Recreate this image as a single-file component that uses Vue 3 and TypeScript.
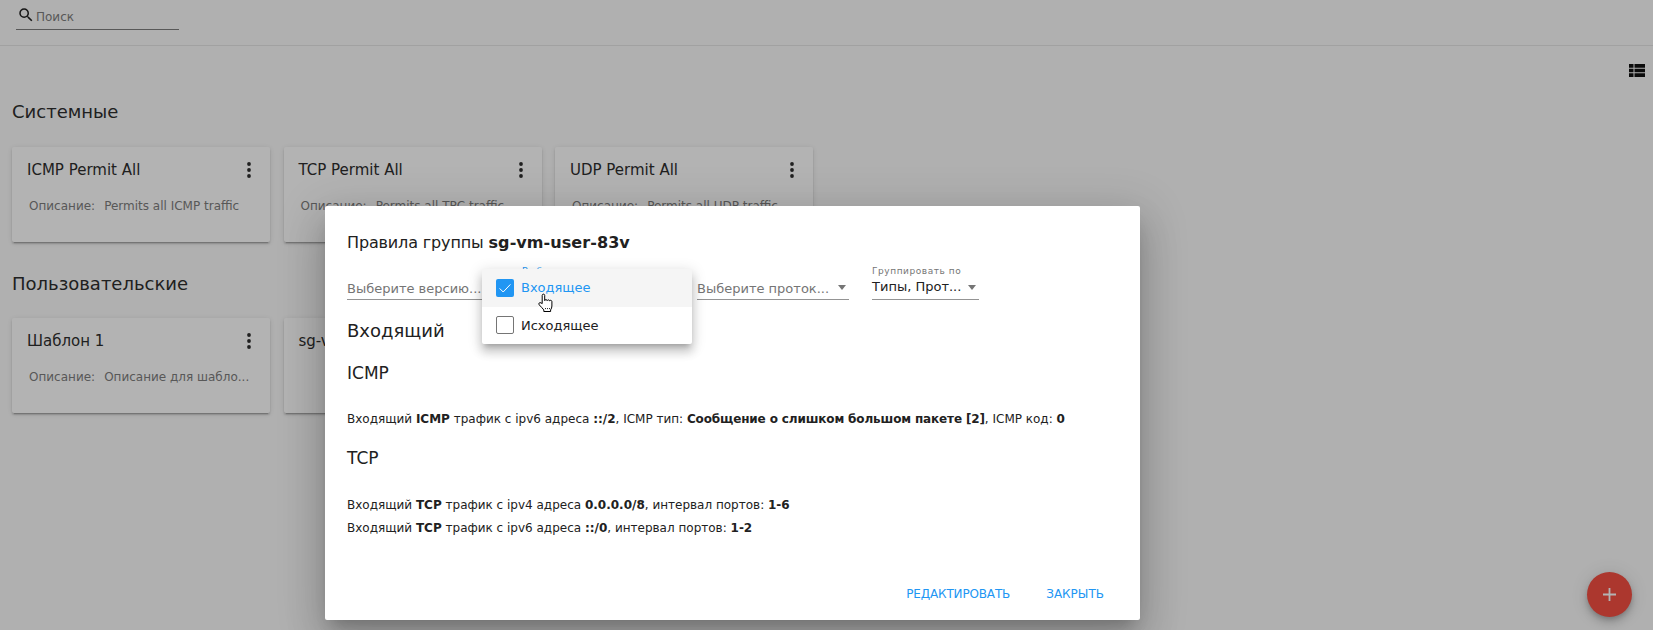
<template>
  <div class="page">
    <header class="topbar">
      <label class="search">
        <svg class="search-icon" viewBox="0 0 24 24"><path d="M15.5 14h-.79l-.28-.27A6.47 6.47 0 0 0 16 9.5 6.5 6.5 0 1 0 9.5 16c1.61 0 3.09-.59 4.23-1.57l.27.28v.79l5 4.99L20.49 19l-4.99-5zm-6 0C7.01 14 5 11.99 5 9.5S7.01 5 9.5 5 14 7.01 14 9.5 11.99 14 9.5 14z" /></svg>
        <span>Поиск</span>
      </label>
    </header>

    <main class="content">
      <div class="view-toggle">
        <svg viewBox="0 0 16 13"><path d="M0 0h4.5v3.7H0zM5.5 0H16v3.7H5.5zM0 4.65h4.5v3.7H0zM5.5 4.65H16v3.7H5.5zM0 9.3h4.5V13H0zM5.5 9.3H16V13H5.5z" /></svg>
      </div>
      <section v-for="group in groups" :key="group.title" class="group">
        <h2>{{ group.title }}</h2>
        <div class="cards">
          <article v-for="card in group.cards" :key="card.name" class="card">
            <div class="card-head">
              <span>{{ card.name }}</span>
              <svg class="dots" viewBox="0 0 4 16"><circle cx="2" cy="2" r="1.9" /><circle cx="2" cy="8" r="1.9" /><circle cx="2" cy="14" r="1.9" /></svg>
            </div>
            <p v-if="card.desc"><span>Описание:</span><span class="desc">{{ card.desc }}</span></p>
          </article>
        </div>
      </section>
    </main>

    <button class="fab" type="button" aria-label="Добавить">
      <svg viewBox="0 0 13 13"><path d="M5.6 0h1.8v5.6H13v1.8H7.4V13H5.6V7.4H0V5.6h5.6z" /></svg>
    </button>

    <div class="overlay"></div>

    <div class="dialog">
      <h3 class="dialog-title">Правила группы <b>sg-vm-user-83v</b></h3>
      <div class="filters">
        <div class="select select-version"><span class="placeholder">Выберите версию...</span></div>
        <div class="select select-direction"><small>Выберите направление</small></div>
        <div class="select select-proto">
          <span class="placeholder">Выберите проток...</span><i class="caret"></i>
        </div>
        <div class="select select-group">
          <small>Группировать по</small>
          <span class="value">Типы, Прот...</span><i class="caret"></i>
        </div>
      </div>
      <h4 class="direction">Входящий</h4>
      <template v-for="block in rules" :key="block.name">
        <h5 class="proto">{{ block.name }}</h5>
        <ul class="rules">
          <li v-for="(line, i) in block.lines" :key="i">
            <template v-for="(part, j) in line" :key="j">
              <b v-if="j % 2" :class="{ tight: part.length > 20 }">{{ part }}</b><span v-else>{{ part }}</span>
            </template>
          </li>
        </ul>
      </template>
      <div class="actions">
        <button type="button" class="edit">РЕДАКТИРОВАТЬ</button>
        <button type="button">ЗАКРЫТЬ</button>
      </div>

      <div class="menu">
        <div class="menu-item active">
          <span class="box checked">
            <svg viewBox="0 0 18 18"><path d="M3.6 9.4l3.6 3.6 7.2-7.6" /></svg>
          </span>
          Входящее
        </div>
        <div class="menu-item"><span class="box"></span>Исходящее</div>
        <svg class="hand" viewBox="0 0 18 20">
          <path d="M5.2 10.6V2.4c0-1.7 2.5-1.7 2.5 0v5.2c.2-1.3 2.3-1.3 2.5 0 .3-1.1 2.2-1 2.4.2.4-.8 2.2-.6 2.3.7v4.5c0 1.6-.5 2.7-1.3 3.9v1.6H6.8v-1.6C5.4 15 3.8 13.7 2.2 11.8c-1.1-1.4.6-2.9 1.8-1.9z" />
          <path class="hand-dots" d="M8 15.6h.9M10 15.6h.9M12 15.6h.9" />
        </svg>
      </div>
    </div>
  </div>
</template>

<script setup lang="ts">
interface Card {
  name: string;
  desc: string;
}

const groups: { title: string; cards: Card[] }[] = [
  {
    title: "Системные",
    cards: [
      { name: "ICMP Permit All", desc: "Permits all ICMP traffic" },
      { name: "TCP Permit All", desc: "Permits all TPC traffic" },
      { name: "UDP Permit All", desc: "Permits all UDP traffic" },
    ],
  },
  {
    title: "Пользовательские",
    cards: [
      { name: "Шаблон 1", desc: "Описание для шабло..." },
      { name: "sg-vm-user-83v", desc: "" },
    ],
  },
];

// odd items are bold
const rules: { name: string; lines: string[][] }[] = [
  {
    name: "ICMP",
    lines: [
      ["Входящий ", "ICMP", " трафик с ipv6 адреса ", "::/2", ", ICMP тип: ", "Сообщение о слишком большом пакете [2]", ", ICMP код: ", "0"],
    ],
  },
  {
    name: "TCP",
    lines: [
      ["Входящий ", "TCP", " трафик с ipv4 адреса ", "0.0.0.0/8", ", интервал портов: ", "1-6"],
      ["Входящий ", "TCP", " трафик с ipv6 адреса ", "::/0", ", интервал портов: ", "1-2"],
    ],
  },
];
</script>

<style>
html,
body {
  margin: 0;
  background: #fafafa;
}
</style>

<style scoped>
.page {
  position: relative;
  width: 1653px;
  height: 630px;
  overflow: hidden;
  background: #fafafa;
  color: #212121;
  font-family: "DejaVu Sans", sans-serif;
}

.topbar {
  height: 46px;
  box-sizing: border-box;
  border-bottom: 1px solid #e4e4e4;
  padding-left: 16px;
}

.search {
  display: flex;
  align-items: center;
  width: 163px;
  height: 30px;
  box-sizing: border-box;
  border-bottom: 1px solid #757575;
  color: #757575;
  font-size: 12px;
  padding-top: 5px;
}

.search-icon {
  width: 18px;
  height: 18px;
  margin: -4px 1px 0 1px;
  fill: #111;
}

.content {
  position: relative;
  padding: 53px 12px 0;
}

.view-toggle {
  position: absolute;
  top: 18px;
  right: 8px;
  width: 16px;
  height: 13px;
}

.view-toggle svg {
  display: block;
  width: 16px;
  height: 13px;
  fill: #000;
}

.group + .group {
  margin-top: 29px;
}

.group h2 {
  margin: 0 0 23px;
  font-size: 18px;
  font-weight: 400;
  line-height: 25px;
}

.group + .group h2 {
  margin-bottom: 22px;
}

.cards {
  display: flex;
  gap: 13.5px;
}

.card {
  width: 258px;
  height: 95px;
  box-sizing: border-box;
  padding: 13px 15px;
  border-radius: 2px;
  background: #fff;
  box-shadow: 0 3px 1px -2px rgba(0, 0, 0, 0.2), 0 2px 2px rgba(0, 0, 0, 0.14), 0 1px 5px rgba(0, 0, 0, 0.12);
}

.card-head {
  display: flex;
  align-items: center;
  justify-content: space-between;
  height: 20px;
  font-size: 15px;
}

.dots {
  width: 4px;
  height: 16px;
  margin-right: 4px;
  fill: #212121;
}

.card p {
  display: flex;
  margin: 18px 0 0 2px;
  color: #757575;
  font-size: 12px;
  line-height: 16px;
}

.desc {
  margin-left: 9px;
}

.fab {
  position: absolute;
  left: 1587px;
  top: 572px;
  display: flex;
  align-items: center;
  justify-content: center;
  width: 45px;
  height: 45px;
  border: 0;
  border-radius: 50%;
  background: #f44336;
  padding: 0;
  box-shadow: 0 3px 5px -1px rgba(0, 0, 0, 0.2), 0 6px 10px rgba(0, 0, 0, 0.14), 0 1px 18px rgba(0, 0, 0, 0.12);
}

.fab svg {
  width: 13px;
  height: 13px;
  fill: #fff;
}

.overlay {
  position: absolute;
  inset: 0;
  background: rgba(33, 33, 33, 0.34);
}

.dialog {
  position: absolute;
  left: 325px;
  top: 206px;
  width: 815px;
  height: 414px;
  box-sizing: border-box;
  padding: 28px 22px 0;
  background: #fff;
  border-radius: 2px;
  box-shadow: 0 11px 15px -7px rgba(0, 0, 0, 0.2), 0 24px 38px 3px rgba(0, 0, 0, 0.14), 0 9px 46px 8px rgba(0, 0, 0, 0.12);
}

.dialog-title {
  margin: 0;
  font-size: 16px;
  font-weight: 400;
  line-height: 18px;
  letter-spacing: -0.14px;
}

.dialog-title b {
  letter-spacing: 0.07px;
}

.filters {
  display: flex;
  align-items: flex-end;
  height: 36px;
  margin-top: 12px;
}

.select {
  position: relative;
  display: flex;
  align-items: center;
  height: 24px;
  box-sizing: border-box;
  border-bottom: 1px solid #949494;
  font-size: 13px;
}

.select small {
  position: absolute;
  left: 0;
  top: -11px;
  font-size: 9px;
  line-height: 12px;
  letter-spacing: 0.56px;
  color: #757575;
  white-space: nowrap;
}

.select-version {
  width: 135px;
}

.select-version .placeholder,
.select-proto .placeholder {
  padding-top: 2px;
}

.select-direction {
  width: 175px;
  border-color: transparent;
}

.select-direction small {
  left: 40px;
  color: #2196f3;
}

.select-proto {
  width: 152px;
  margin-left: 40px;
}

.select-group {
  width: 107px;
  margin-left: 23px;
}

.placeholder {
  color: #757575;
  white-space: nowrap;
}

.value {
  color: #212121;
  white-space: nowrap;
  padding-bottom: 2px;
}

.caret {
  width: 0;
  height: 0;
  margin-left: auto;
  margin-right: 3px;
  border-left: 4.5px solid transparent;
  border-right: 4.5px solid transparent;
  border-top: 5px solid #757575;
}

.direction {
  margin: 18px 0 0;
  font-size: 18px;
  font-weight: 400;
  line-height: 26px;
}

.proto {
  margin: 19px 0 0;
  font-size: 17px;
  font-weight: 400;
  line-height: 20px;
}

.rules {
  margin: 25px 0 0;
  padding: 0;
  list-style: none;
  font-size: 12px;
  line-height: 23px;
  color: #212121;
}

.rules + .proto {
  margin-top: 17px;
  padding-bottom: 1px;
}

.tight {
  letter-spacing: -0.14px;
}

.actions {
  position: absolute;
  right: 36px;
  bottom: 17px;
  display: flex;
  gap: 36px;
}

.actions button {
  border: 0;
  background: none;
  padding: 0;
  color: #2196f3;
  font: inherit;
  font-size: 12px;
  line-height: 18px;
}

.actions .edit {
  letter-spacing: -0.15px;
}

.menu {
  position: absolute;
  left: 157px;
  top: 63px;
  width: 210px;
  background: #fff;
  border-radius: 2px;
  box-shadow: 0 5px 5px -3px rgba(0, 0, 0, 0.2), 0 8px 10px 1px rgba(0, 0, 0, 0.14), 0 3px 14px 2px rgba(0, 0, 0, 0.12);
}

.menu-item {
  display: flex;
  align-items: center;
  gap: 7px;
  height: 37.5px;
  padding-left: 14px;
  font-size: 13px;
  color: #212121;
}

.menu-item.active {
  background: #f5f5f5;
  color: #2196f3;
}

.box {
  width: 18px;
  height: 18px;
  box-sizing: border-box;
  border: 1px solid #757575;
  border-radius: 2px;
}

.box.checked {
  border: 0;
  background: #2196f3;
}

.box svg {
  display: block;
  width: 18px;
  height: 18px;
  fill: none;
  stroke: #fff;
  stroke-width: 1;
}

.hand {
  position: absolute;
  left: 55px;
  top: 24px;
  width: 18px;
  height: 20px;
  fill: #fff;
  stroke: #000;
  stroke-width: 1;
}

.hand-dots {
  stroke-width: 1;
  fill: none;
}
</style>
